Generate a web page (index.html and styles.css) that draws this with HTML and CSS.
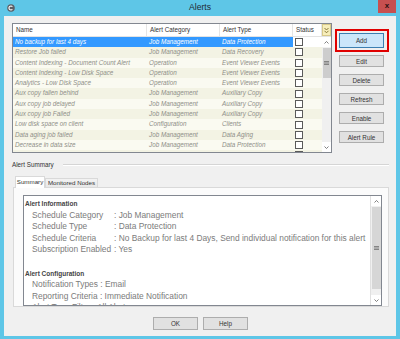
FILE: index.html
```html
<!DOCTYPE html>
<html lang="en">
<head>
  <meta charset="UTF-8">
  <title>Alerts</title>
  <link rel="stylesheet" href="styles.css">
</head>
<body>

<div class="window">
  <div class="titlebar">
    <svg class="app-icon" width="8" height="8" viewBox="0 0 8 8">
      <circle cx="4" cy="4" r="3.8" fill="#5c5f66"/>
      <path d="M5.4 2.6 A2 2 0 1 0 5.4 5.4" fill="none" stroke="#fff" stroke-width="1.1"/>
    </svg>
    <div class="title">Alerts</div>
    <div class="close">x</div>
  </div>

  <div class="client">
    <div class="top">
      <div class="listview">
        <div class="lv-head">
          <div class="th">Name</div>
          <div class="th">Alert Category</div>
          <div class="th">Alert Type</div>
          <div class="th">Status</div>
          <div class="th chooser">
            <svg width="7" height="7" viewBox="0 0 7 7">
              <path d="M1.5 1 L3.5 3 L5.5 1 M1.5 3.8 L3.5 5.8 L5.5 3.8" fill="none" stroke="#7a6a2a" stroke-width="0.9"/>
            </svg>
          </div>
        </div>
        <div class="lv-body">
          <div class="rows">
            <div class="row selected"><span>No backup for last 4 days</span><span>Job Management</span><span>Data Protection</span><span class="c-status"><i class="chk"></i></span></div>
            <div class="row"><span>Restore Job failed</span><span>Job Management</span><span>Data Recovery</span><span class="c-status"><i class="chk"></i></span></div>
            <div class="row"><span>Content Indexing - Document Count Alert</span><span>Operation</span><span>Event Viewer Events</span><span class="c-status"><i class="chk"></i></span></div>
            <div class="row"><span>Content Indexing - Low Disk Space</span><span>Operation</span><span>Event Viewer Events</span><span class="c-status"><i class="chk"></i></span></div>
            <div class="row"><span>Analytics - Low Disk Space</span><span>Operation</span><span>Event Viewer Events</span><span class="c-status"><i class="chk"></i></span></div>
            <div class="row"><span>Aux copy fallen behind</span><span>Job Management</span><span>Auxiliary Copy</span><span class="c-status"><i class="chk"></i></span></div>
            <div class="row"><span>Aux copy job delayed</span><span>Job Management</span><span>Auxiliary Copy</span><span class="c-status"><i class="chk"></i></span></div>
            <div class="row"><span>Aux copy job Failed</span><span>Job Management</span><span>Auxiliary Copy</span><span class="c-status"><i class="chk"></i></span></div>
            <div class="row"><span>Low disk space on client</span><span>Configuration</span><span>Clients</span><span class="c-status"><i class="chk"></i></span></div>
            <div class="row"><span>Data aging job failed</span><span>Job Management</span><span>Data Aging</span><span class="c-status"><i class="chk"></i></span></div>
            <div class="row"><span>Decrease in data size</span><span>Job Management</span><span>Data Protection</span><span class="c-status"><i class="chk"></i></span></div>
            <div class="row"><span></span><span></span><span></span><span class="c-status"><i class="chk"></i></span></div>
          </div>
          <div class="vscroll small">
            <div class="arrow"><svg width="5" height="3" viewBox="0 0 5 3"><path d="M0.5 2.5 L2.5 0.5 L4.5 2.5" fill="none" stroke="#606060" stroke-width="0.8"/></svg></div>
            <div class="track">
              <div class="thumb list-thumb">
                <svg width="5" height="4" viewBox="0 0 5 4"><path d="M0 0.5 H5 M0 2 H5 M0 3.5 H5" stroke="#707070" stroke-width="0.8"/></svg>
              </div>
            </div>
            <div class="arrow"><svg width="5" height="3" viewBox="0 0 5 3"><path d="M0.5 0.5 L2.5 2.5 L4.5 0.5" fill="none" stroke="#606060" stroke-width="0.8"/></svg></div>
          </div>
        </div>
      </div>

      <div class="actions">
        <div class="highlight"><button class="btn add">Add</button></div>
        <button class="btn">Edit</button>
        <button class="btn">Delete</button>
        <button class="btn">Refresh</button>
        <button class="btn">Enable</button>
        <button class="btn">Alert Rule</button>
      </div>
    </div>

    <div class="group-title">
      <span>Alert Summary</span>
      <div class="rule"></div>
    </div>

    <div class="tabs">
      <div class="tab active">Summary</div>
      <div class="tab wide">Monitored Nodes</div>
    </div>

    <div class="tab-panel">
      <div class="textbox">
        <div class="summary">
          <div class="sec-title">Alert Information</div>
          <div class="kv">
            <span>Schedule Category</span><span>: Job Management</span>
            <span>Schedule Type</span><span>: Data Protection</span>
            <span>Schedule Criteria</span><span>: No Backup for last 4 Days, Send individual notification for this alert</span>
            <span>Subscription Enabled</span><span>: Yes</span>
          </div>
          <div class="sec-title spaced">Alert Configuration</div>
          <div class="line">Notification Types : Email</div>
          <div class="line">Reporting Criteria : Immediate Notification</div>
          <div class="line">Alert Type Filter : All Alerts</div>
        </div>
        <div class="vscroll big">
          <div class="arrow"><svg width="5" height="3" viewBox="0 0 5 3"><path d="M0.5 2.5 L2.5 0.5 L4.5 2.5" fill="none" stroke="#606060" stroke-width="0.8"/></svg></div>
          <div class="track">
            <div class="thumb text-thumb">
              <svg width="5" height="4" viewBox="0 0 5 4"><path d="M0 0.5 H5 M0 2 H5 M0 3.5 H5" stroke="#707070" stroke-width="0.8"/></svg>
            </div>
          </div>
          <div class="arrow"><svg width="5" height="3" viewBox="0 0 5 3"><path d="M0.5 0.5 L2.5 2.5 L4.5 0.5" fill="none" stroke="#606060" stroke-width="0.8"/></svg></div>
        </div>
      </div>
    </div>

    <div class="footer">
      <button class="btn big-btn">OK</button>
      <button class="btn big-btn">Help</button>
    </div>
  </div>
</div>

</body>
</html>
```

FILE: styles.css
```css
body {
  margin: 0;
  background: #5ec6e7;
  font-family: "Liberation Sans", Arial, sans-serif;
  overflow: hidden;
}
.window {
  width: 400px;
  height: 339px;
  box-sizing: border-box;
  padding: 0 4px 3px;
  display: flex;
  flex-direction: column;
}
.titlebar {
  height: 16px;
  display: grid;
  grid-template-columns: 1fr auto 1fr;
  align-items: start;
}
.app-icon {
  margin: 4px 0 0 3px;
}
.title {
  font-size: 8.6px;
  line-height: 14px;
  color: #1e2a33;
}
.close {
  justify-self: end;
  width: 18px;
  height: 13px;
  background: #c75050;
  color: #2a1010;
  font-size: 8px;
  font-weight: bold;
  line-height: 12px;
  text-align: center;
}
.client {
  flex: 1;
  background: #f0f0f0;
  display: flex;
  flex-direction: column;
  padding: 7px 7px 6px 8px;
}
.top {
  display: flex;
}

/* list view */
.listview {
  width: 320px;
  height: 130px;
  box-sizing: border-box;
  border: 1px solid #828790;
  background: #fff;
  display: flex;
  flex-direction: column;
  overflow: hidden;
}
.lv-head {
  display: grid;
  grid-template-columns: 134px 73px 73px 29px 9px;
  height: 13px;
  box-sizing: border-box;
  border-bottom: 1px solid #e3e3e3;
}
.th {
  font-size: 6.3px;
  line-height: 12px;
  color: #333;
  padding-left: 3px;
  border-right: 1px solid #e5e5e5;
  white-space: nowrap;
}
.th.chooser {
  padding: 0;
  border-right: none;
  display: flex;
  align-items: center;
  justify-content: center;
  background: #f7eebb;
  border: 1px solid #d8c98a;
}
.lv-body {
  display: flex;
  flex: 1;
  overflow: hidden;
}
.rows {
  width: 309px;
}
.row {
  display: grid;
  grid-template-columns: 134px 73px 73px 29px;
  height: 10.3px;
  font-size: 6.3px;
  line-height: 10.3px;
  font-style: italic;
  color: #8f8f88;
  background: #fafaf1;
}
.row:nth-child(even) {
  background: #f3f3e4;
}
.row span {
  padding-left: 2px;
  white-space: nowrap;
  overflow: hidden;
}
.row.selected span {
  background: #3399ff;
  color: #fff;
}
.row.selected span.c-status {
  background: #fff;
}
.c-status {
  display: flex;
  align-items: center;
}
.chk {
  display: block;
  width: 8px;
  height: 8px;
  box-sizing: border-box;
  border: 1px solid #5a5a5a;
  background: #fff;
}

/* scrollbars */
.vscroll {
  display: flex;
  flex-direction: column;
  background: #f0f0f0;
}
.vscroll.small {
  width: 9px;
}
.vscroll.big {
  width: 10px;
  border-left: 1px solid #e0e0e0;
}
.arrow {
  height: 10px;
  display: flex;
  align-items: center;
  justify-content: center;
  background: #fff;
}
.track {
  flex: 1;
}
.thumb {
  margin: 1px 0.5px 0;
  background: #cdcdcd;
  display: flex;
  align-items: center;
  justify-content: center;
}
.list-thumb {
  height: 30px;
}
.text-thumb {
  height: 82px;
  background: #d6d6d6;
}

/* buttons */
.actions {
  width: 55px;
  padding: 6px 0 0 2px;
  display: flex;
  flex-direction: column;
  align-items: center;
  gap: 7px;
}
.highlight {
  width: 54px;
  box-sizing: border-box;
  border: 2px solid #e00000;
  padding: 2px;
  display: flex;
  justify-content: center;
  margin-bottom: -4px;
}
.btn {
  width: 45px;
  height: 12px;
  padding: 0;
  font-family: "Liberation Sans", Arial, sans-serif;
  font-size: 6.3px;
  color: #333;
  background: #e1e1e1;
  border: 1px solid #adadad;
}
.btn.add {
  height: 15px;
  background: #cbe6fa;
  border-color: #3c7fb1;
}
.btn.big-btn {
  height: 13px;
}

/* summary group */
.group-title {
  margin-top: 8px;
  height: 8px;
  display: flex;
  align-items: center;
  font-size: 6.3px;
  line-height: 8px;
  color: #333;
}
.rule {
  flex: 1;
  height: 1px;
  margin-left: 9px;
  background: #d5d5d5;
  border-bottom: 1px solid #fff;
}
.tabs {
  margin: 8px 0 0 3px;
  height: 10px;
  display: flex;
  align-items: flex-end;
}
.tab {
  position: relative;
  width: 30px;
  height: 9px;
  box-sizing: border-box;
  border: 1px solid #d9d9d9;
  border-bottom: none;
  background: linear-gradient(#f3f3f3, #e8e8e8);
  font-size: 6.2px;
  line-height: 8px;
  color: #333;
  text-align: center;
  white-space: nowrap;
}
.tab.wide {
  width: 53px;
}
.tab.active {
  height: 12px;
  margin-bottom: -1px;
  background: #fff;
  z-index: 1;
  line-height: 10px;
}
.tab-panel {
  margin-left: 1px;
  height: 120px;
  box-sizing: border-box;
  border: 1px solid #d9d9d9;
  background: #fbfbfb;
  padding: 7px 6px 0 9px;
  display: flex;
}
.textbox {
  flex: 1;
  display: flex;
  border: 1px solid #828790;
  background: #fff;
  overflow: hidden;
}
.summary {
  flex: 1;
  padding: 2px 0 0 1px;
  font-size: 8.4px;
  line-height: 11.6px;
  color: #7b7b7b;
  overflow: hidden;
}
.sec-title {
  font-size: 6.5px;
  font-weight: bold;
  color: #444;
}
.sec-title.spaced {
  margin-top: 11.6px;
}
.kv {
  display: grid;
  grid-template-columns: 82px auto;
  padding-left: 7px;
  white-space: nowrap;
}
.line {
  padding-left: 7px;
  white-space: nowrap;
}
.footer {
  margin-top: auto;
  display: flex;
  justify-content: center;
  gap: 5px;
}
```
